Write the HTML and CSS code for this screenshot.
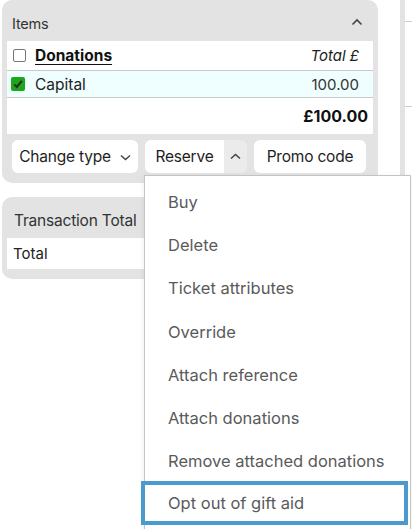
FILE: index.html
```html
<!DOCTYPE html>
<html lang="en">
<head>
<meta charset="utf-8">
<title>Basket</title>
<link rel="stylesheet" href="styles.css">
</head>
<body>
<div class="layout">
  <div class="main">
    <section class="panel items">
      <div class="panel-head">
        <span class="panel-title">Items</span>
        <svg class="chev" width="12" height="8" viewBox="0 0 12 8"><polyline points="1.5,6.5 6,2 10.5,6.5" fill="none" stroke="#444" stroke-width="1.6"/></svg>
      </div>
      <div class="table">
        <div class="row row-head">
          <span class="box"></span>
          <span class="name head-name">Donations</span>
          <span class="amount head-amount">Total £</span>
        </div>
        <div class="row row-item">
          <span class="box checked">
            <svg width="14" height="14" viewBox="0 0 14 14"><polyline points="3.2,7.4 5.8,10 10.8,3.8" fill="none" stroke="#2a2a2a" stroke-width="2"/></svg>
          </span>
          <span class="name">Capital</span>
          <span class="amount">100.00</span>
        </div>
        <div class="row row-total">
          <span class="grand">£100.00</span>
        </div>
      </div>
      <div class="actions">
        <button class="btn btn-type">Change type
          <svg class="btn-chev" width="11" height="7" viewBox="0 0 11 7"><polyline points="1,1.5 5.5,5.5 10,1.5" fill="none" stroke="#444" stroke-width="1.5"/></svg>
        </button>
        <div class="split">
          <button class="btn split-main">Reserve</button>
          <button class="split-toggle">
            <svg width="11" height="7" viewBox="0 0 11 7"><polyline points="1,5.5 5.5,1.5 10,5.5" fill="none" stroke="#444" stroke-width="1.5"/></svg>
          </button>
        </div>
        <button class="btn btn-promo">Promo code</button>
      </div>
    </section>

    <section class="panel totals">
      <div class="panel-head">
        <span class="panel-title">Transaction Total</span>
      </div>
      <div class="table">
        <div class="row row-sum">
          <span class="name">Total</span>
        </div>
      </div>
    </section>
  </div>

  <aside class="side">
    <div class="side-inner">
      <div class="side-row r1"></div>
      <div class="side-row r2"></div>
    </div>
  </aside>
</div>

<ul class="menu">
  <li class="menu-item">Buy</li>
  <li class="menu-item">Delete</li>
  <li class="menu-item">Ticket attributes</li>
  <li class="menu-item">Override</li>
  <li class="menu-item">Attach reference</li>
  <li class="menu-item">Attach donations</li>
  <li class="menu-item">Remove attached donations</li>
  <li class="menu-item active">Opt out of gift aid</li>
</ul>
</body>
</html>
```

FILE: styles.css
```css
html, body {
  margin: 0;
  padding: 0;
  overflow: hidden;
  background: #fff;
}

body {
  font-family: Inter, "Liberation Sans", sans-serif;
  color: #222;
  height: 529px;
  position: relative;
}

.layout {
  display: flex;
  align-items: flex-start;
  gap: 22px;
  padding-left: 2px;
}

.main {
  width: 376px;
  flex: none;
  display: flex;
  flex-direction: column;
  gap: 14px;
}

.panel {
  background: #e3e3e3;
  border-radius: 10px;
  padding: 0 5px 10px;
}

.panel-head {
  height: 41px;
  display: flex;
  align-items: center;
  justify-content: space-between;
  padding: 5px 10px 0 5px;
  box-sizing: border-box;
}

.panel-title {
  font-size: 14.5px;
  color: #333;
  letter-spacing: -0.2px;
}

.chev {
  margin-top: -2px;
}

.table {
  background: #fff;
}

.row {
  display: flex;
  align-items: center;
  padding: 0 14px 0 6px;
}

.row-head {
  height: 29px;
  border-bottom: 1px solid #c9c9c9;
}

.row-item {
  height: 26px;
  background: #effefe;
  border-bottom: 1px solid #c9c9c9;
  padding-left: 4px;
}

.row-total {
  height: 36px;
  justify-content: flex-end;
  padding-right: 5px;
}

.box {
  width: 13px;
  height: 13px;
  border: 1px solid #777;
  border-radius: 2px;
  box-sizing: border-box;
  margin: 0 9px 0 0;
  background: #fff;
}

.box.checked {
  width: 14px;
  height: 14px;
  border: none;
  background: #1ba61b;
  border-radius: 2px;
  margin-right: 10px;
  display: flex;
}

.name {
  font-size: 15.5px;
  flex: 1;
}

.head-name {
  font-weight: 700;
  color: #111;
  text-decoration: underline;
  text-underline-offset: 3px;
}

.amount {
  font-size: 15px;
  color: #333;
}

.head-amount {
  font-style: italic;
  color: #222;
}

.grand {
  font-size: 16px;
  font-weight: 700;
  color: #111;
}

.actions {
  display: flex;
  gap: 7px;
  margin-top: 6px;
  padding-left: 5px;
}

button {
  font-family: inherit;
  border: none;
  cursor: pointer;
  white-space: nowrap;
  flex: none;
}

.btn {
  height: 33px;
  background: #fff;
  border-radius: 6px;
  font-size: 15.5px;
  letter-spacing: -0.2px;
  color: #1e1e1e;
  padding: 0;
  display: flex;
  align-items: center;
  justify-content: center;
  gap: 9px;
}

.btn-type {
  width: 126px;
}

.btn-chev {
  margin-top: 1px;
}

.btn-promo {
  width: 112px;
}

.split {
  display: flex;
  flex: none;
}

.split-main {
  width: 79px;
  border-radius: 6px 0 0 6px;
}

.split-toggle {
  height: 33px;
  width: 23px;
  background: #ebebeb;
  border-radius: 0 6px 6px 0;
  padding: 0;
  display: flex;
  align-items: center;
  justify-content: center;
}

.totals .panel-head {
  padding-left: 7px;
}

.totals .panel-title {
  font-size: 15.5px;
}

.row-sum {
  height: 31px;
}

.row-sum .name {
  font-size: 15px;
}

.side {
  flex: 1;
  background: #e3e3e3;
  padding-left: 5px;
  height: 230px;
}

.side-inner {
  background: #fff;
  height: 100%;
}

.side-row {
  border-bottom: 1px solid #cfcfcf;
}

.r1 { height: 21px; }
.r2 { height: 84px; }

/* Action menu opened from the Reserve toggle */
.menu {
  position: absolute;
  left: 144px;
  top: 175px;
  width: 267px;
  box-sizing: border-box;
  margin: 0;
  padding: 4px 6px 20px 0;
  list-style: none;
  background: #fff;
  border: 1px solid #c4c4c4;
  box-shadow: 0 2px 6px rgba(0, 0, 0, 0.08);
}

.menu-item {
  height: 43.3px;
  display: flex;
  align-items: center;
  padding-left: 23px;
  font-size: 16.5px;
  color: #5a5a5a;
  box-sizing: border-box;
}

.menu-item.active {
  border: 4px solid #4b9acd;
  height: 44px;
  margin: -2px 0 0 -4px;
  width: 267px;
  padding-left: 23px;
}
```
